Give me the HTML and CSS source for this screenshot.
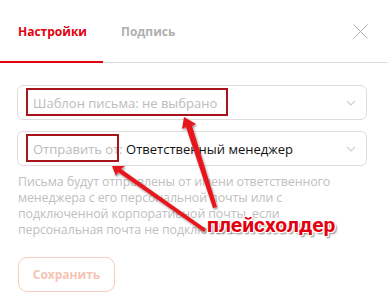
FILE: index.html
```html
<!DOCTYPE html>
<html lang="ru">
<head>
<meta charset="utf-8">
<link rel="stylesheet" href="styles.css">
</head>
<body>
<div class="panel">
  <div class="header">
    <div class="tab active">Настройки</div>
    <div class="tab">Подпись</div>
    <div class="close">
      <svg width="15" height="15" viewBox="0 0 15 15"><path d="M0.5 0.5L14.5 14.5M14.5 0.5L0.5 14.5" stroke="#ababab" stroke-width="1" fill="none"/></svg>
    </div>
  </div>
  <div class="form">
    <div class="field">
      <span class="ph">Шаблон письма: не выбрано</span>
      <svg class="chev" width="10" height="6" viewBox="0 0 10 6"><path d="M1 1L5 5L9 1" stroke="#d0d0d0" stroke-width="1.2" fill="none"/></svg>
    </div>
    <div class="field">
      <span class="ph">Отправить от:</span><span class="val">&nbsp;Ответственный менеджер</span>
      <svg class="chev" width="10" height="6" viewBox="0 0 10 6"><path d="M1 1L5 5L9 1" stroke="#d0d0d0" stroke-width="1.2" fill="none"/></svg>
    </div>
    <p class="help">Письма будут отправлены от имени ответственного менеджера с его персональной почты или с подключенной корпоративной почты, если персональная почта не подключена</p>
    <button class="save">Сохранить</button>
  </div>

  <div class="mark mark1"></div>
  <div class="mark mark2"></div>
  <svg class="arrows" width="388" height="302" viewBox="0 0 388 302">
    <defs>
      <filter id="sh" x="-20%" y="-20%" width="140%" height="140%">
        <feDropShadow dx="1" dy="1.5" stdDeviation="1" flood-color="#000" flood-opacity="0.45"/>
      </filter>
    </defs>
    <g fill="#e8141a" filter="url(#sh)">
      <polygon points="184,117 196,124 192,126 217,207 213,208 186,127 182,129"/>
      <polygon points="112,166 125,166 121,169 206,229 204,232 118,172 116,176"/>
    </g>
  </svg>
  <div class="label">плейсхолдер</div>
</div>
</body>
</html>
```
FILE: styles.css
```css
html, body {
  margin: 0;
  padding: 0;
  background: #fff;
}
body {
  font-family: "Open Sans", "Noto Sans", sans-serif;
  width: 388px;
  height: 302px;
  overflow: hidden;
}
.panel {
  position: relative;
  width: 388px;
  height: 302px;
}
.header {
  display: flex;
  align-items: stretch;
  height: 62px;
  border-bottom: 1px solid #dcdcdc;
  box-sizing: border-box;
  height: 63px;
}
.tab {
  display: flex;
  align-items: center;
  padding: 2px 21px 0 18px;
  font-size: 12px;
  font-weight: 700;
  color: #b0b0b0;
  margin-bottom: -1px;
  border-bottom: 2px solid transparent;
}
.tab.active {
  color: #e3000f;
  border-bottom-color: #e3000f;
  width: 64px;
}
.close {
  margin-left: auto;
  display: flex;
  align-items: center;
  padding: 0 20px 0 0;
}
.form {
  padding: 22px 21px 0 17px;
  display: flex;
  flex-direction: column;
}
.field {
  display: flex;
  align-items: center;
  height: 33px;
  border: 1px solid #dedede;
  border-radius: 6px;
  padding: 0 10px 0 15px;
  font-size: 13px;
  margin-bottom: 11px;
}
.ph {
  color: #bcbcbc;
}
.val {
  color: #111;
}
.chev {
  margin-left: auto;
}
.help {
  margin: -3px 0 0 1px;
  font-size: 12.4px;
  line-height: 16px;
  color: #c0c0c0;
  letter-spacing: -0.1px;
}
.save {
  margin-top: 19px;
  width: 97px;
  height: 35px;
  border: 1px solid #f7cdbd;
  border-radius: 9px;
  background: #fff;
  color: #f6c4b2;
  font-family: "Open Sans", sans-serif;
  font-size: 12px;
  font-weight: 700;
  padding: 0;
  align-self: flex-start;
  margin-left: 1px;
}
.mark {
  position: absolute;
  border: 2.5px solid #a8141b;
  box-sizing: border-box;
}
.mark1 {
  left: 26px;
  top: 88px;
  width: 202px;
  height: 28px;
}
.mark2 {
  left: 26px;
  top: 134px;
  width: 93px;
  height: 28px;
}
.arrows {
  position: absolute;
  left: 0;
  top: 0;
}
.label {
  position: absolute;
  left: 207px;
  top: 215px;
  font-family: Roboto, sans-serif;
  font-weight: 700;
  font-size: 21px;
  line-height: 21px;
  color: #e3000f;
  text-shadow: 1px 0 0 #fff, -1px 0 0 #fff, 0 1px 0 #fff, 0 -1px 0 #fff, 1px 1px 0 #fff, -1px -1px 0 #fff, 1px -1px 0 #fff, -1px 1px 0 #fff, 2px 2px 2px rgba(0,0,0,0.5);
}
```
